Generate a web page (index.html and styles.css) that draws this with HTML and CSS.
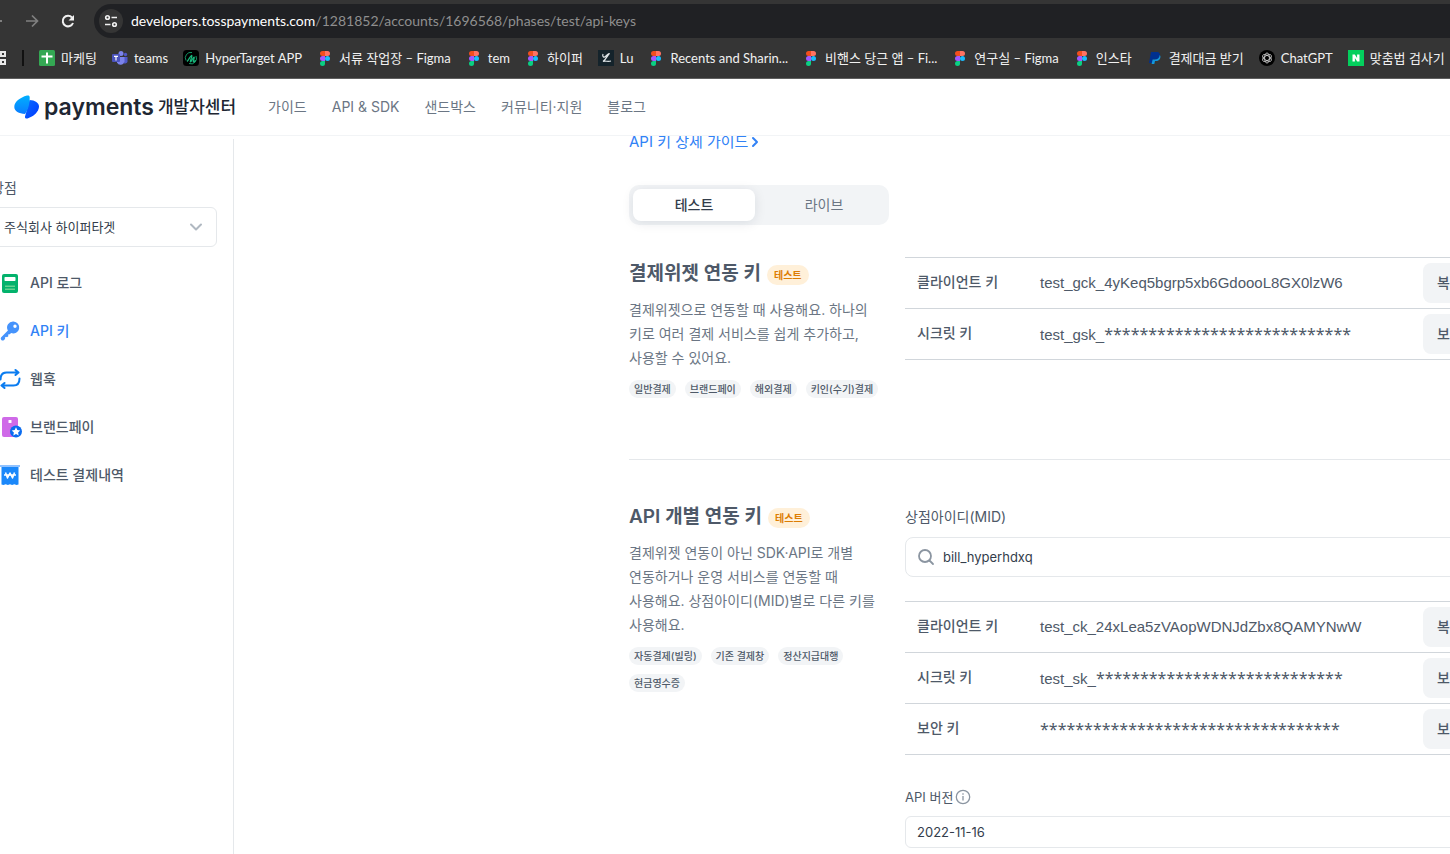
FILE: index.html
```html
<!DOCTYPE html>
<html lang="ko">
<head>
    <meta charset="UTF-8">
    <meta name="viewport" content="width=device-width, initial-scale=1.0">
    <title>API 키 | 토스페이먼츠 개발자센터</title>
    <link rel="stylesheet" href="styles.css">
</head>
<body>
    <svg width="0" height="0" class="sprite" aria-hidden="true">
        <symbol id="figma" viewBox="0 0 16 16">
            <path fill="#f24e1e" d="M5.500 1H8v5H5.500a2.500 2.500 0 0 1 0-5z"/>
            <path fill="#ff7262" d="M8 1h2.500a2.500 2.500 0 0 1 0 5H8z"/>
            <path fill="#a259ff" d="M5.500 6H8v5H5.500a2.500 2.500 0 0 1 0-5z"/>
            <circle fill="#1abcfe" cx="10.500" cy="8.500" r="2.500"/>
            <path fill="#0acf83" d="M5.500 11H8v2.500A2.500 2.500 0 1 1 5.500 11z"/>
        </symbol>
    </svg>

    <div class="browser">
        <div class="toolbar">
            <button class="tool-button back" aria-label="뒤로">
                <svg width="16" height="16" viewBox="0 0 16 16" fill="none" stroke="#808080" stroke-width="2"><path d="M14 8H3M8 3L3 8l5 5"/></svg>
            </button>
            <button class="tool-button" aria-label="앞으로">
                <svg width="16" height="16" viewBox="0 0 16 16" fill="none" stroke="#808080" stroke-width="1.700"><path d="M2 8h11M8 2.500L13.500 8 8 13.500"/></svg>
            </button>
            <button class="tool-button" aria-label="새로고침">
                <svg width="16" height="16" viewBox="0 0 16 16" fill="none" stroke="#f1f1f1" stroke-width="2"><path d="M13 10a5.300 5.300 0 1 1-1-5.500"/><path fill="#f1f1f1" stroke="none" d="M14 2v5.500H8.500z"/></svg>
            </button>
            <div class="address">
                <button class="site-info" aria-label="사이트 정보">
                    <svg width="14" height="14" viewBox="0 0 14 14" fill="none" stroke="#f1f1f1" stroke-width="1.600"><circle cx="3.500" cy="3.500" r="1.800"/><path d="M7.500 3.500H13M1 10.500h5.500"/><circle cx="10.500" cy="10.500" r="1.800"/></svg>
                </button>
                <span class="url">developers.tosspayments.com<span class="url-path">/1281852/accounts/1696568/phases/test/api-keys</span></span>
            </div>
        </div>
        <nav class="bookmarks" aria-label="북마크">
            <button class="apps" aria-label="앱">
                <svg width="16" height="16" viewBox="0 0 16 16" fill="none" stroke="#e8e8e8" stroke-width="2"><path d="M3 2h4v4H3zM10 2h4v4h-4zM3 10h4v4H3zM10 10h4v4h-4z"/></svg>
            </button>
            <span class="bar"></span>
            <a href="#"><svg viewBox="0 0 16 16"><rect width="16" height="16" rx="1.500" fill="#34a853"/><path stroke="#fff" stroke-width="2" d="M2.500 6.500h11M8 2.500v11"/></svg>마케팅</a>
            <a href="#"><svg viewBox="0 0 16 16"><circle cx="9" cy="3.500" r="2.500" fill="#7b83eb"/><circle cx="13.500" cy="4.500" r="1.700" fill="#5059c9"/><path fill="#5059c9" d="M11 7h4.500v4.500a2.500 2.500 0 0 1-4 1.500z"/><path fill="#7b83eb" d="M5 7h7.500v4.500a4 4 0 0 1-7.500 1z"/><rect y="4" width="8" height="8" rx="1" fill="#4b53bc"/><path d="M2 6.300h4M4 6.300V10.500" stroke="#fff" stroke-width="1.200"/></svg>teams</a>
            <a href="#"><svg viewBox="0 0 16 16"><rect width="16" height="16" rx="3.500" fill="#000"/><g fill="none" stroke="#18b87c"><path d="M3 10.500A5.500 5.500 0 0 1 9 2.500M13 6a5.500 5.500 0 0 1-7 7.500" stroke-width=".8"/><path d="M4 11.500C6 10 7 6 8.500 5.500S6.500 12 7.500 12 10 7 11 7s-1.500 5-.5 5 1.500-1 2-2" stroke-width="1.200"/></g></svg>HyperTarget APP</a>
            <a href="#"><svg><use href="#figma"/></svg>서류 작업장 – Figma</a>
            <a href="#"><svg><use href="#figma"/></svg>tem</a>
            <a href="#"><svg><use href="#figma"/></svg>하이퍼</a>
            <a href="#"><svg viewBox="0 0 16 16"><rect width="16" height="16" fill="#14232b"/><path fill="none" stroke="#dfe5e8" stroke-width="1.200" d="M5 4c-1 3 1 4 3 2s4-3 3-2-3 5-6 7.500c2-1 5 .5 8-.5"/></svg>Lu</a>
            <a href="#"><svg><use href="#figma"/></svg>Recents and Sharin...</a>
            <a href="#"><svg><use href="#figma"/></svg>비핸스 당근 앱 – Fi...</a>
            <a href="#"><svg><use href="#figma"/></svg>연구실 – Figma</a>
            <a href="#"><svg><use href="#figma"/></svg>인스타</a>
            <a href="#"><svg viewBox="0 0 16 16"><path fill="#00308f" d="M4 2h5.500c3 0 4 2 3.300 4.200C12 8.700 10 9.500 7.500 9.500H6L5.200 13H2z"/><path fill="#1296dc" d="M12.700 5c1 .9.900 2.500.3 3.700-.7 1.600-2.300 2.300-4.500 2.300H8L7.300 14H4.600l1-4.500h2C10.500 9.500 12.500 8 12.700 5z"/></svg>결제대금 받기</a>
            <a href="#"><svg viewBox="0 0 16 16"><circle cx="8" cy="8" r="8" fill="#000"/><g fill="none" stroke="#d8d8d8" stroke-width=".8"><ellipse cx="8" cy="8" rx="2.400" ry="5"/><ellipse cx="8" cy="8" rx="2.400" ry="5" transform="rotate(60 8 8)"/><ellipse cx="8" cy="8" rx="2.400" ry="5" transform="rotate(120 8 8)"/></g></svg>ChatGPT</a>
            <a href="#"><svg viewBox="0 0 16 16"><rect width="16" height="16" fill="#03cf5d"/><path fill="#fff" d="M4.500 4.500h2.300l2.300 3.400V4.500h2.400v7H9.200L6.900 8.100v3.400H4.500z"/></svg>맞춤법 검사기</a>
        </nav>
    </div>

    <header class="site-header">
        <a href="#" class="logo">
            <svg width="26" height="24" viewBox="0 0 26 24">
                <defs>
                    <linearGradient id="logoLeft" x1="0" y1="0" x2="0" y2="1"><stop offset="0" stop-color="#00b0ff"/><stop offset="1" stop-color="#0a7cff"/></linearGradient>
                    <linearGradient id="logoRight" x1="0" y1="0" x2="1" y2="1"><stop offset="0" stop-color="#0a6cff"/><stop offset="1" stop-color="#0038ff"/></linearGradient>
                </defs>
                <path fill="url(#logoRight)" d="M15.500 5C21 5 25 8 25 11.500c0 5-5.500 10-11.500 12-1.700.4-2.700-.4-2.500-2z"/>
                <path fill="url(#logoLeft)" d="M13 .6c1.500-.5 2.700.1 2.700 1.700 0 6-1.200 12.200-4.700 16.700C5 18.700.3 16 .3 12 .3 7 6 2.500 13 .6z"/>
            </svg>
            <span class="logo-name">payments</span>
            <span class="logo-sub">개발자센터</span>
        </a>
        <nav class="site-nav">
            <a href="#">가이드</a>
            <a href="#">API &amp; SDK</a>
            <a href="#">샌드박스</a>
            <a href="#">커뮤니티·지원</a>
            <a href="#">블로그</a>
        </nav>
    </header>

    <div class="layout">
        <aside class="sidebar">
            <label class="store-label" for="store">상점</label>
            <div class="select-box">
                <select id="store" class="store-select">
                    <option>주식회사 하이퍼타겟</option>
                </select>
                <svg class="chevron" width="14" height="14" viewBox="0 0 14 14" fill="none" stroke="#b0b8c1" stroke-width="2" stroke-linecap="round" stroke-linejoin="round"><path d="M2 4.500l5 5 5-5"/></svg>
            </div>
            <nav class="menu">
                <a href="#">
                    <svg viewBox="0 0 20 20"><rect x="2" y="1" width="16" height="19" rx="2" fill="#03b26c"/><rect x="4.500" y="4" width="11" height="4" rx=".8" fill="#fff"/><path fill="#66d28f" d="M5 12.500h10V14H5zM5 15.500h10V17H5z"/></svg>
                    API 로그
                </a>
                <a href="#" class="active">
                    <svg viewBox="0 0 20 20"><path fill="#4593fc" fill-rule="evenodd" d="M13.500.5a6 6 0 1 1-2.400 11.600L9.500 13.500 9 13l-1 1 .5 1-1.500 1.200-1-.5-1.200 1.100.4 1L3.800 19.200A2 2 0 0 1 1 16.500l6.900-7A6 6 0 0 1 13.500.5zM15 3.500a1.700 1.700 0 1 0 0 3.400 1.700 1.700 0 0 0 0-3.400z"/></svg>
                    API 키
                </a>
                <a href="#">
                    <svg viewBox="0 0 20 20" fill="none" stroke="#0a7cf0" stroke-width="2" stroke-linecap="round" stroke-linejoin="round"><path d="M.5 10.500C.5 6 3 3.500 6.500 3.500H18M15.500 1l3 2.500-3 2.500M19.500 9.500c0 4.500-2.500 7-6 7H2M4.500 14l-3 2.500 3 2.500"/></svg>
                    웹훅
                </a>
                <a href="#">
                    <svg viewBox="0 0 20 20"><rect x="2" y="0" width="16" height="20" rx="2" fill="#cf6ae8"/><rect x="8.500" y="3" width="3" height="3" rx=".5" fill="#fff"/><circle cx="16" cy="14.500" r="6" fill="#0a6cf0"/><path fill="#fff" d="M16 10.200l1.300 2.800 3 .4-2.200 2.100.6 3L16 17l-2.700 1.500.6-3-2.200-2.100 3-.4z"/></svg>
                    브랜드페이
                </a>
                <a href="#">
                    <svg viewBox="0 0 20 20"><path fill="#1b88fa" d="M1.500 1h17v18.500l-2 .5-2.200-.8-2.200.8-2.100-.8-2.100.8-2.200-.8-2.200.8-2-.5z"/><path fill="#90c2ff" d="M0 0h20v2H0z"/><path fill="none" stroke="#fff" stroke-width="1.500" stroke-linejoin="round" d="M5.500 7.500l2 5.500L10 8l2.500 5 2-5.500M4 10h12"/></svg>
                    테스트 결제내역
                </a>
            </nav>
        </aside>

        <main class="content">
            <a href="#" class="guide-link">API 키 상세 가이드
                <svg width="8" height="12" viewBox="0 0 8 12" fill="none" stroke="#3182f6" stroke-width="2" stroke-linecap="round" stroke-linejoin="round"><path d="M2 2l4 4-4 4"/></svg>
            </a>
            <div class="tabs">
                <button class="tab selected">테스트</button>
                <button class="tab">라이브</button>
            </div>

            <section class="key-section">
                <div class="intro">
                    <h2>결제위젯 연동 키 <span class="badge">테스트</span></h2>
                    <p>결제위젯으로 연동할 때 사용해요. 하나의 키로 여러 결제 서비스를 쉽게 추가하고, 사용할 수 있어요.</p>
                    <ul class="tags">
                        <li>일반결제</li>
                        <li>브랜드페이</li>
                        <li>해외결제</li>
                        <li>키인(수기)결제</li>
                    </ul>
                </div>
                <div class="keys">
                    <table class="key-table">
                        <tr><th scope="row">클라이언트 키</th><td>test_gck_4yKeq5bgrp5xb6GdoooL8GX0lzW6</td><td class="action"><button>복사</button></td></tr>
                        <tr><th scope="row">시크릿 키</th><td>test_gsk_<span class="mask">****************************</span></td><td class="action"><button>보기</button></td></tr>
                    </table>
                </div>
            </section>

            <section class="key-section">
                <div class="intro">
                    <h2>API 개별 연동 키 <span class="badge">테스트</span></h2>
                    <p>결제위젯 연동이 아닌 SDK·API로 개별 연동하거나 운영 서비스를 연동할 때 사용해요. 상점아이디(MID)별로 다른 키를 사용해요.</p>
                    <ul class="tags">
                        <li>자동결제(빌링)</li>
                        <li>기존 결제창</li>
                        <li>정산지급대행</li>
                        <li>현금영수증</li>
                    </ul>
                </div>
                <div class="keys">
                    <label class="mid-label" for="mid">상점아이디(MID)</label>
                    <div class="search">
                        <svg width="18" height="18" viewBox="0 0 18 18" fill="none" stroke="#8b95a1" stroke-width="1.800" stroke-linecap="round"><circle cx="8" cy="8" r="6"/><path d="M12.500 12.500l3.500 3.500"/></svg>
                        <input type="text" id="mid" value="bill_hyperhdxq">
                    </div>
                    <table class="key-table">
                        <tr><th scope="row">클라이언트 키</th><td>test_ck_24xLea5zVAopWDNJdZbx8QAMYNwW</td><td class="action"><button>복사</button></td></tr>
                        <tr><th scope="row">시크릿 키</th><td>test_sk_<span class="mask">****************************</span></td><td class="action"><button>보기</button></td></tr>
                        <tr><th scope="row">보안 키</th><td><span class="mask">**********************************</span></td><td class="action"><button>보기</button></td></tr>
                    </table>
                    <label class="version-label" for="version">API 버전
                        <svg width="16" height="16" viewBox="0 0 16 16" fill="none" stroke="#8b95a1" stroke-width="1.300"><circle cx="8" cy="8" r="6.700"/><path d="M8 7v4.500M8 4.300v1.500"/></svg>
                    </label>
                    <select id="version" class="version-select">
                        <option>2022-11-16</option>
                    </select>
                </div>
            </section>
        </main>
    </div>
</body>
</html>
```
FILE: styles.css
```css
* {
    box-sizing: border-box;
}

body {
    margin: 0;
    height: 100vh;
    display: flex;
    flex-direction: column;
    overflow: hidden;
    background: #fff;
    color: #4e5968;
    font-family: Inter, "Noto Sans CJK KR", sans-serif;
    font-size: 14px;
    line-height: 24px;
    word-break: keep-all;
}

a {
    color: inherit;
    text-decoration: none;
}

button,
input,
select {
    font: inherit;
    color: inherit;
    border: none;
    background: none;
    padding: 0;
    margin: 0;
}

button {
    cursor: pointer;
}

.sprite {
    position: absolute;
}

/* browser bar */
.browser {
    flex: none;
    background: #353535;
    border-bottom: 1px solid #5f5f5f;
    color: #f1f1f1;
    font-family: Lato, "Noto Sans CJK KR", sans-serif;
    overflow: hidden;
}

.toolbar {
    display: flex;
    align-items: center;
    gap: 20px;
    padding: 4px 0 0;
    margin-left: -12px;
}

.tool-button {
    display: flex;
}

.address {
    flex: 1;
    display: flex;
    align-items: center;
    gap: 8px;
    height: 34px;
    padding-left: 5px;
    margin: 0 -20px 0 -2px;
    border-radius: 17px;
    background: #202124;
}

.site-info {
    display: flex;
    align-items: center;
    justify-content: center;
    width: 24px;
    height: 24px;
    border-radius: 50%;
    background: #353535;
}

.url {
    font-size: 14px;
    color: #fff;
    white-space: nowrap;
}

.url-path {
    color: #8f8f8f;
}

.bookmarks {
    display: flex;
    align-items: center;
    gap: 15px;
    height: 40px;
    margin-left: -9px;
    font-size: 13px;
}

.bookmarks a {
    display: flex;
    align-items: center;
    gap: 6px;
    flex: none;
    white-space: nowrap;
}

.bookmarks a svg {
    width: 16px;
    height: 16px;
}

.apps {
    display: flex;
}

.bar {
    width: 2px;
    height: 16px;
    background: #111;
}

/* site header */
.site-header {
    flex: none;
    display: flex;
    align-items: center;
    gap: 32px;
    height: 57px;
    padding-left: 14px;
    border-bottom: 1px solid #f2f4f6;
}

.logo {
    display: flex;
    align-items: center;
    gap: 4px;
    color: #202632;
}

.logo-name {
    font-size: 23px;
    font-weight: 600;
}

.logo-sub {
    font-size: 17px;
    font-weight: 500;
}

.site-nav {
    display: flex;
    gap: 25px;
    color: #6b7684;
}

/* page */
.layout {
    flex: 1;
    min-height: 0;
    display: flex;
    overflow: hidden;
}

.sidebar {
    flex: none;
    width: 243px;
    margin: 3px 0 0 -9px;
    padding: 37px 16px 0 0;
    border-right: 1px solid #e5e8eb;
}

.store-label {
    display: block;
    margin-bottom: 7px;
}

.select-box {
    position: relative;
}

.store-select {
    appearance: none;
    width: 100%;
    height: 40px;
    padding: 0 12px;
    border: 1px solid #e5e8eb;
    border-radius: 6px;
    font-size: 13px;
    color: #333d4b;
}

.chevron {
    position: absolute;
    right: 14px;
    top: 13px;
    pointer-events: none;
}

.menu {
    display: flex;
    flex-direction: column;
    gap: 24px;
    margin-top: 24px;
    padding-left: 9px;
    font-weight: 500;
}

.menu a {
    display: flex;
    align-items: center;
    gap: 10px;
}

.menu svg {
    width: 20px;
    height: 20px;
    overflow: visible;
}

.active {
    color: #3182f6;
}

.content {
    flex: 1;
    min-width: 0;
    padding-left: 395px;
    overflow: hidden;
}

.guide-link {
    display: flex;
    align-items: center;
    gap: 3px;
    margin-top: -6px;
    color: #3182f6;
    font-size: 15px;
}

.tabs {
    display: flex;
    width: 260px;
    height: 40px;
    margin: 31px 0 32px;
    padding: 4px;
    gap: 8px;
    border-radius: 10px;
    background: #f2f4f6;
}

.tab {
    flex: 1;
    border-radius: 8px;
    color: #6b7684;
}

.tab.selected {
    background: #fff;
    box-shadow: 0 2px 12px rgba(0, 27, 55, 0.1);
    color: #333d4b;
    font-weight: 500;
}

.key-section {
    display: grid;
    grid-template-columns: 260px 600px;
    gap: 16px;
    padding-bottom: 61px;
}

.key-section + .key-section {
    width: 876px;
    border-top: 1px solid #e5e8eb;
    padding-top: 40px;
}

h2 {
    display: flex;
    align-items: center;
    gap: 6px;
    margin: 0 0 7px;
    font-size: 19px;
    font-weight: 600;
    line-height: 34px;
}

.badge {
    margin-top: 2px;
    padding: 0 7px;
    border-radius: 10px;
    background: #fff0d9;
    color: #dd7d02;
    font-size: 10px;
    font-weight: 600;
    line-height: 20px;
}

.intro p {
    margin: 0 0 10px;
    color: #6b7684;
}

.tags {
    display: flex;
    flex-wrap: wrap;
    gap: 9px;
    margin: 0;
    padding: 0;
    list-style: none;
}

.tags li {
    padding: 0 5px;
    border-radius: 9px;
    background: #f2f4f6;
    font-size: 10px;
    font-weight: 500;
    line-height: 18px;
}

.key-table {
    width: 100%;
    border-collapse: collapse;
    table-layout: fixed;
}

.key-table tr {
    height: 51px;
    border-top: 1px solid #d1d6db;
    border-bottom: 1px solid #d1d6db;
}

.key-table th {
    width: 135px;
    padding: 0 0 3px 12px;
    text-align: left;
    font-weight: 500;
}

.key-table td {
    padding: 0;
    font-family: "Liberation Sans", "Noto Sans CJK KR", sans-serif;
    font-size: 15px;
}

.key-table .action {
    width: 82px;
}

.action button {
    display: block;
    height: 40px;
    padding: 0 14px;
    border-radius: 8px;
    background: #f2f4f6;
    font-size: 14px;
    font-weight: 500;
}

.mask {
    font-family: "Noto Sans", sans-serif;
    font-size: 16px;
}

.mid-label {
    display: block;
    margin: 5px 0 8px;
}

.search {
    display: flex;
    align-items: center;
    gap: 8px;
    height: 40px;
    margin-bottom: 24px;
    padding: 0 11px;
    border: 1px solid #e5e8eb;
    border-radius: 8px;
}

.search input {
    flex: 1;
    outline: none;
    color: #333d4b;
    font-size: 13px;
}

.version-label {
    display: flex;
    align-items: center;
    gap: 2px;
    margin: 30px 0 7px;
    font-size: 13px;
}

.version-select {
    appearance: none;
    display: block;
    width: 100%;
    height: 32px;
    padding: 0 11px;
    border: 1px solid #e5e8eb;
    border-radius: 6px;
    font-size: 13px;
    color: #333d4b;
}
```
